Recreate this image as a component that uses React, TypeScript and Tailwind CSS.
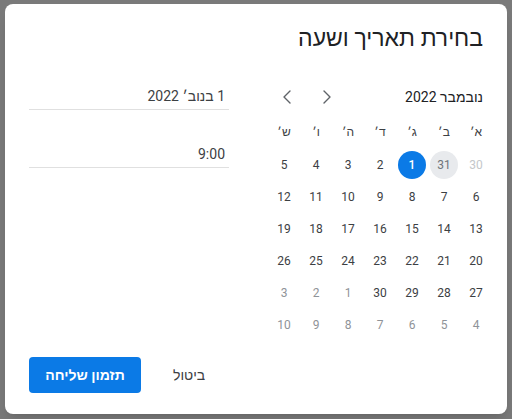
import { ChevronLeft, ChevronRight } from "lucide-react";

type Day = { n: number; kind: "past" | "today" | "selected" | "normal" | "next" };

const weekDays = ["א׳", "ב׳", "ג׳", "ד׳", "ה׳", "ו׳", "ש׳"];

const rows: Day[][] = [
  [
    { n: 30, kind: "past" },
    { n: 31, kind: "today" },
    { n: 1, kind: "selected" },
    { n: 2, kind: "normal" },
    { n: 3, kind: "normal" },
    { n: 4, kind: "normal" },
    { n: 5, kind: "normal" },
  ],
  [6, 7, 8, 9, 10, 11, 12].map((n) => ({ n, kind: "normal" as const })),
  [13, 14, 15, 16, 17, 18, 19].map((n) => ({ n, kind: "normal" as const })),
  [20, 21, 22, 23, 24, 25, 26].map((n) => ({ n, kind: "normal" as const })),
  [
    { n: 27, kind: "normal" },
    { n: 28, kind: "normal" },
    { n: 29, kind: "normal" },
    { n: 30, kind: "normal" },
    { n: 1, kind: "next" },
    { n: 2, kind: "next" },
    { n: 3, kind: "next" },
  ],
  [4, 5, 6, 7, 8, 9, 10].map((n) => ({ n, kind: "next" as const })),
];

function DayCell({ day }: { day: Day }) {
  const styles = {
    past: "text-[#c4c7ca]",
    today: "bg-[#e8eaed] text-[#70757a]",
    selected: "bg-[#0b7ae6] text-white font-medium",
    normal: "text-[#3c4043]",
    next: "text-[#8f9398]",
  }[day.kind];

  return (
    <div className="flex h-8 w-8 items-center justify-center">
      <div className={`flex h-7 w-7 items-center justify-center rounded-full text-[12px] ${styles}`}>
        {day.n}
      </div>
    </div>
  );
}

export default function App() {
  return (
    <div
      className="h-[419px] w-[512px] overflow-hidden bg-[#7a7a7a] pl-[5px] pt-[4px]"
      style={{ fontFamily: 'Roboto, "Liberation Sans", sans-serif' }}
    >
      <div
        dir="rtl"
        className="flex h-[410px] w-[502px] flex-col rounded-lg bg-white pb-[21px] shadow-lg"
      >
        <h1 className="pr-6 pt-[19px] text-[23px] font-normal leading-8 text-[#202124]">
          בחירת תאריך ושעה
        </h1>

        <div className="mt-[31px] flex">
          {/* calendar */}
          <div className="mr-[15px] w-[224px]">
            <div className="flex h-[22px] items-center justify-between">
              <span className="pr-[9px] text-[14px] text-[#202124]">נובמבר 2022</span>
              <div className="flex items-center gap-4 pl-[7px] text-[#5f6368]">
                <ChevronRight size={24} strokeWidth={1.4} />
                <ChevronLeft size={24} strokeWidth={1.4} />
              </div>
            </div>
            <div className="mt-[12px] grid grid-cols-7">
              {weekDays.map((d) => (
                <div key={d} className="flex h-6 w-8 items-center justify-center text-[12px] text-[#3c4043]">
                  {d}
                </div>
              ))}
            </div>
            <div className="mt-[5px]">
              {rows.map((row, i) => (
                <div key={i} className="grid grid-cols-7">
                  {row.map((day, j) => (
                    <DayCell key={j} day={day} />
                  ))}
                </div>
              ))}
            </div>
          </div>

          {/* date + time fields */}
          <div className="mr-auto ml-6 w-[200px]">
            <div className="flex h-[24px] items-center border-b border-[#e0e0e0] pb-[2px] pr-1 text-[14px] text-[#3c4043]">
              1 בנוב׳ 2022
            </div>
            <div className="mt-[34px] flex h-[24px] items-center border-b border-[#e0e0e0] pb-[2px] pr-1 text-[14px] text-[#3c4043]">
              9:00
            </div>
          </div>
        </div>

        <div className="mt-auto flex items-center justify-end gap-2 pl-6">
          <button className="h-9 px-6 text-[14px] font-medium text-[#3c4043]">ביטול</button>
          <button className="h-9 w-[112px] rounded bg-[#0b7ae6] text-[14px] font-bold text-white">
            תזמון שליחה
          </button>
        </div>
      </div>
    </div>
  );
}
